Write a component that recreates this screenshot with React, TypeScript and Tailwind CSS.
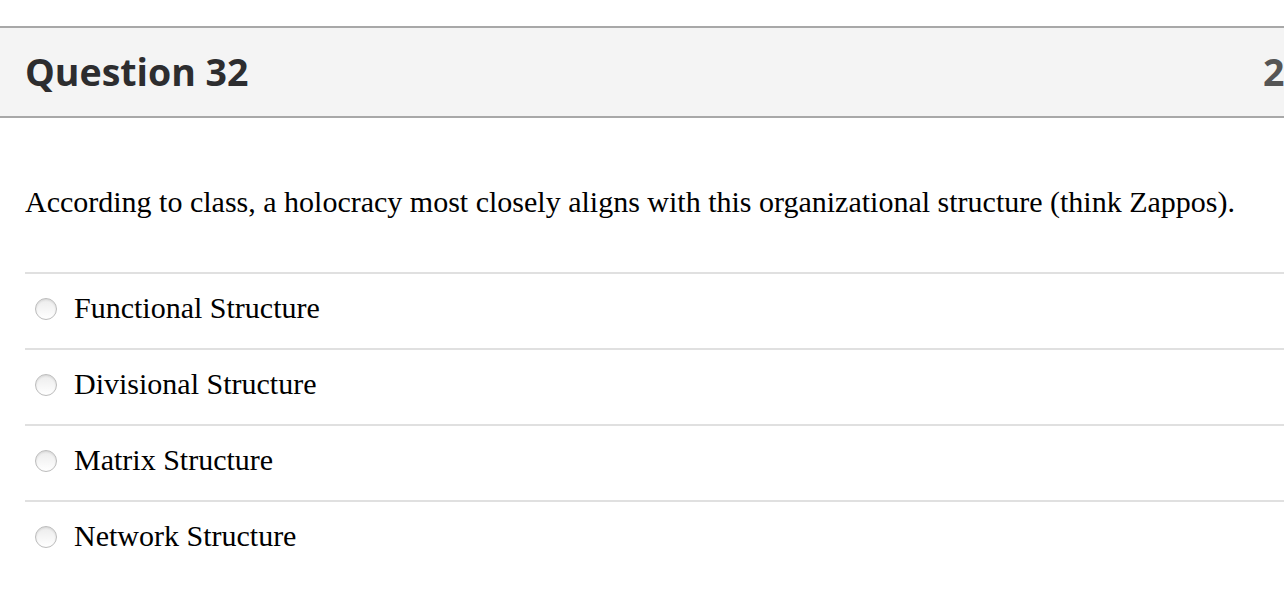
import React from "react";

const options = [
  "Functional Structure",
  "Divisional Structure",
  "Matrix Structure",
  "Network Structure",
];

function Radio() {
  return (
    <span className="block w-[22px] h-[22px] -translate-y-[2px] rounded-full border border-[#bcbcbc] bg-gradient-to-b from-[#ececec] to-[#ffffff] shadow-[inset_0_1px_2px_rgba(0,0,0,0.1)] shrink-0" />
  );
}

export default function App() {
  return (
    <div className="w-[1284px] h-[614px] bg-white overflow-hidden">
      <div className="h-[26px]" />
      <div className="relative h-[92px] border-y-2 border-[#a8a8a8] bg-[#f4f4f4] pl-[25px] pt-[25px] overflow-hidden">
        <h2 className="text-[37.5px] font-bold text-[#2d2d2f] leading-none" style={{ fontFamily: '"Open Sans", sans-serif' }}>
          Question 32
        </h2>
        <span className="absolute left-[1263px] top-[25px] text-[37.5px] font-bold text-[#555555] leading-none whitespace-nowrap" style={{ fontFamily: '"Open Sans", sans-serif' }}>
          2 points
        </span>
      </div>
      <div className="pl-[25px]" style={{ fontFamily: '"Liberation Serif", "Times New Roman", serif' }}>
        <p className="pt-[67px] text-[30px] leading-[34px] text-black whitespace-nowrap">
          According to class, a holocracy most closely aligns with this organizational structure (think Zappos).
        </p>
        <ul className="mt-[53px]">
          {options.map((o) => (
            <li key={o} className="h-[76px] border-t-2 border-[#e0e0e0] flex items-center pl-[10px] gap-[17px]">
              <Radio />
              <span className="text-[30px] text-black leading-none -translate-y-[3px]">{o}</span>
            </li>
          ))}
        </ul>
      </div>
    </div>
  );
}
